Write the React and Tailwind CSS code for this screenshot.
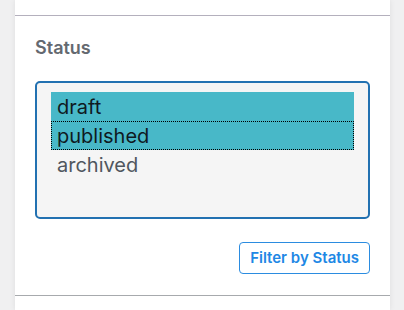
export default function App() {
  const options = ["draft", "published", "archived"];
  const selected = ["draft", "published"];

  return (
    <div className="h-[310px] w-[404px] overflow-hidden bg-[#f0f0f1] font-[Inter,sans-serif]">
      <div className="ml-[15px] h-full w-[375px] bg-white shadow-[0_0_6px_rgba(0,0,0,0.08)]">
        <div className="h-[16px] border-b border-[#b4b0bd]" />
        <div className="px-5 pt-[21px] pb-[21px] border-b border-[#a7aaad]">
          <h3 className="text-[18px] font-semibold leading-[22px] text-[#646970]">Status</h3>

          {/* multi select list */}
          <div className="mt-[22px] h-[138px] rounded-[5px] border-2 border-[#2271b1] bg-[#f5f5f5] px-[14px] pt-[9px]">
            {options.map((opt) => {
              const isSel = selected.includes(opt);
              return (
                <div
                  key={opt}
                  className={`h-[29px] px-[6px] text-[20px] leading-[30px] ${
                    isSel ? "bg-[#48b8c8] text-[#0f1a1f]" : "text-[#50575e]"
                  } ${opt === "published" ? "outline outline-1 outline-dotted outline-black -outline-offset-1" : ""}`}
                >
                  {opt}
                </div>
              );
            })}
          </div>

          <div className="mt-[23px] flex justify-end">
            <button className="h-[32px] rounded-[4px] border border-[#2b8ce0] bg-white px-[10px] text-[15px] font-semibold text-[#1e88e5]">
              Filter by Status
            </button>
          </div>
        </div>
      </div>
    </div>
  );
}
